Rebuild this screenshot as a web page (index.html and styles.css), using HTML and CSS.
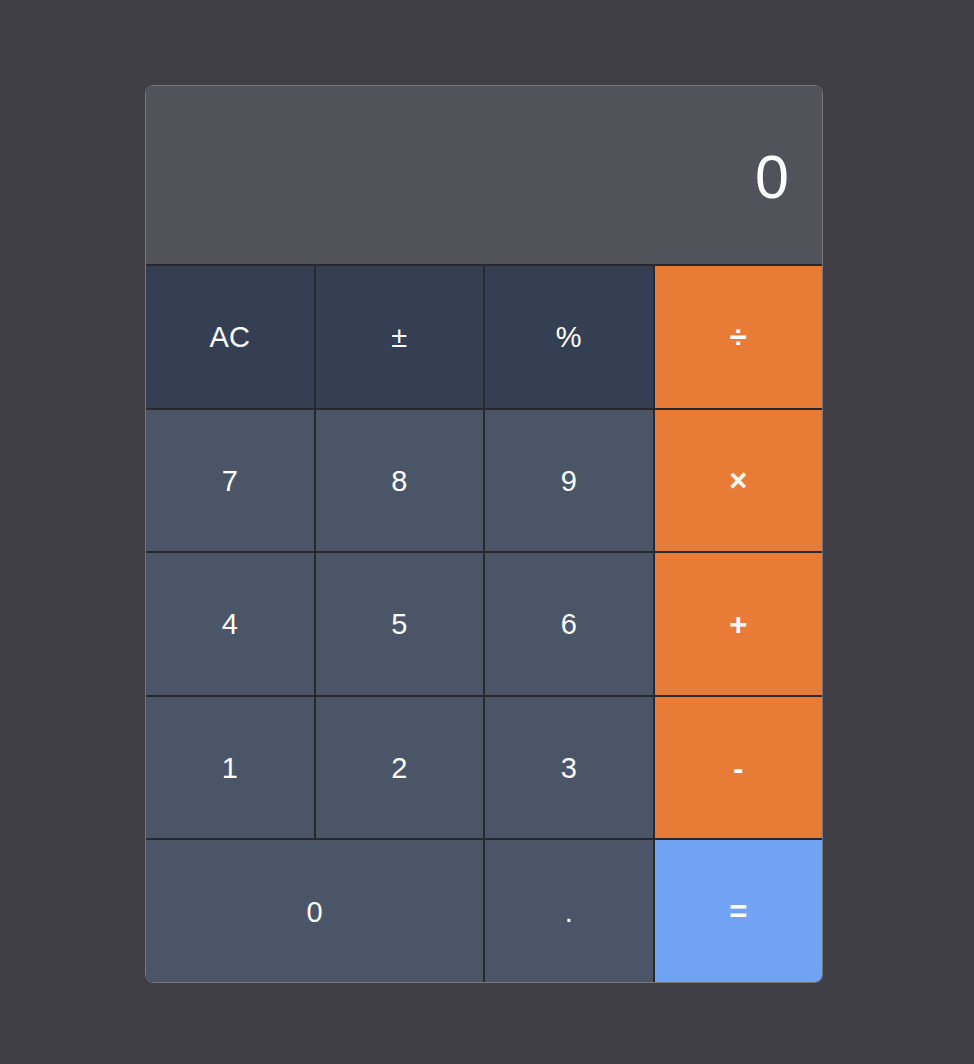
FILE: index.html
```html
<!DOCTYPE html>
<html lang="en">
<head>
<meta charset="utf-8">
<title>Calculator</title>
<link rel="stylesheet" href="styles.css">
</head>
<body>
<main class="page">
  <div class="calc">
    <div class="display">0</div>
    <div class="keys">
      <button class="key fn">AC</button>
      <button class="key fn">±</button>
      <button class="key fn">%</button>
      <button class="key op">÷</button>
      <button class="key num">7</button>
      <button class="key num">8</button>
      <button class="key num">9</button>
      <button class="key op">×</button>
      <button class="key num">4</button>
      <button class="key num">5</button>
      <button class="key num">6</button>
      <button class="key op">+</button>
      <button class="key num">1</button>
      <button class="key num">2</button>
      <button class="key num">3</button>
      <button class="key op">-</button>
      <button class="key num wide">0</button>
      <button class="key num">.</button>
      <button class="key eq">=</button>
    </div>
  </div>
</main>
</body>
</html>
```

FILE: styles.css
```css
* { box-sizing: border-box; }
html, body {
  margin: 0;
  padding: 0;
  background: #3f3e44;
  font-family: "Liberation Sans", Arial, sans-serif;
}
.page {
  width: 974px;
  height: 1064px;
  display: flex;
  justify-content: center;
  padding-top: 85px;
  padding-right: 6px;
}
.calc {
  width: 678px;
  height: 898px;
  border: 1px solid #76767b;
  border-radius: 8px;
  overflow: hidden;
  background: #29292b;
  display: flex;
  flex-direction: column;
  gap: 2px;
}
.display {
  height: 178px;
  flex: none;
  background: #52525b;
  color: #ffffff;
  font-size: 61px;
  display: flex;
  align-items: center;
  justify-content: flex-end;
  padding-right: 33px;
  padding-top: 3px;
}
.keys {
  flex: 1;
  display: grid;
  grid-template-columns: repeat(4, 1fr);
  grid-template-rows: repeat(5, 1fr);
  gap: 2px;
}
.key {
  border: 0;
  margin: 0;
  padding: 0;
  color: #ffffff;
  font-family: "Liberation Sans", Arial, sans-serif;
  font-size: 29px;
  display: flex;
  align-items: center;
  justify-content: center;
  padding-top: 2px;
}
.fn { background: #343f53; }
.num { background: #4a5567; }
.op { background: #e87c37; font-weight: bold; font-size: 31px; }
.eq { background: #71a2f4; font-weight: bold; font-size: 31px; }
.wide { grid-column: span 2; }
```
